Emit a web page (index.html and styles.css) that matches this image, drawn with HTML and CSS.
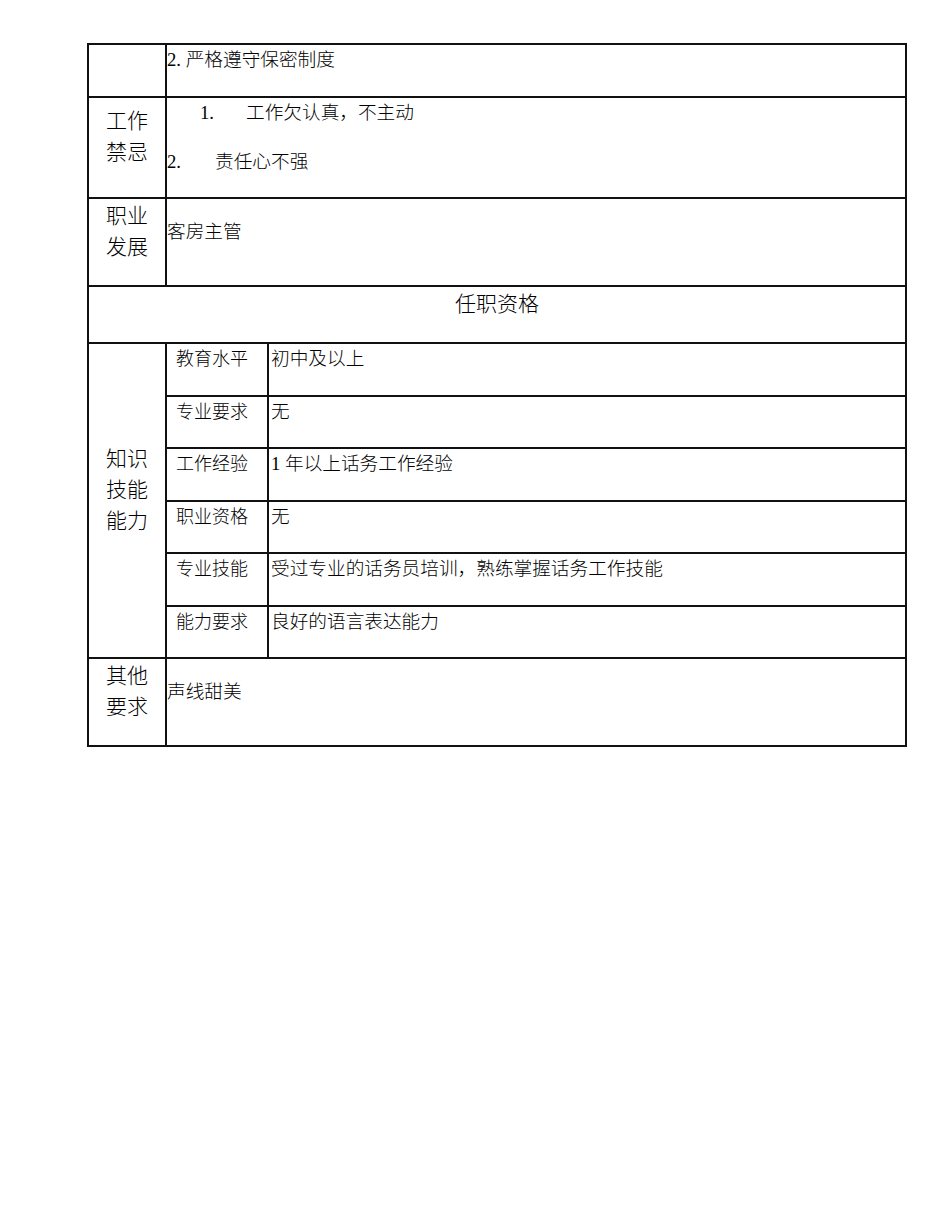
FILE: index.html
```html
<!DOCTYPE html>
<html lang="zh-CN">
<head>
<meta charset="utf-8">
<title>岗位说明书</title>
<link rel="stylesheet" href="styles.css">
</head>
<body>
<table class="sheet">
  <colgroup>
    <col class="c-label">
    <col class="c-sub">
    <col class="c-main">
  </colgroup>
  <tbody>
    <tr class="h53">
      <td class="label"></td>
      <td class="content" colspan="2">2. 严格遵守保密制度</td>
    </tr>
    <tr class="h101">
      <td class="label">工作<br>禁忌</td>
      <td class="content" colspan="2">
        <div class="item item-1"><span class="num num-1">1.</span>工作欠认真，不主动</div>
        <div class="item item-2"><span class="num num-2">2.</span>责任心不强</div>
      </td>
    </tr>
    <tr class="h88">
      <td class="label">职业<br>发展</td>
      <td class="content" colspan="2">客房主管</td>
    </tr>
    <tr class="h57">
      <td class="section" colspan="3">任职资格</td>
    </tr>
    <tr class="h53">
      <td class="label" rowspan="6">知识<br>技能<br>能力</td>
      <td class="sub">教育水平</td>
      <td class="content main">初中及以上</td>
    </tr>
    <tr class="h52">
      <td class="sub">专业要求</td>
      <td class="content main">无</td>
    </tr>
    <tr class="h53">
      <td class="sub">工作经验</td>
      <td class="content main">1 年以上话务工作经验</td>
    </tr>
    <tr class="h52">
      <td class="sub">职业资格</td>
      <td class="content main">无</td>
    </tr>
    <tr class="h53">
      <td class="sub">专业技能</td>
      <td class="content main">受过专业的话务员培训，熟练掌握话务工作技能</td>
    </tr>
    <tr class="h52">
      <td class="sub">能力要求</td>
      <td class="content main">良好的语言表达能力</td>
    </tr>
    <tr class="h88">
      <td class="label">其他<br>要求</td>
      <td class="content" colspan="2">声线甜美</td>
    </tr>
  </tbody>
</table>
</body>
</html>
```
FILE: styles.css
```css
html, body {
  margin: 0;
  padding: 0;
  background: #ffffff;
}

body {
  font-family: "Liberation Serif", "Noto Sans CJK SC", serif;
  font-weight: 300;
  color: #000000;
}

.sheet {
  margin: 43px 0 0 87px;
  width: 820px;
  border-collapse: collapse;
  table-layout: fixed;
}

.c-label { width: 78px; }
.c-sub { width: 102px; }
.c-main { width: auto; }

.sheet td {
  border: 2px solid #111111;
  vertical-align: middle;
  padding: 0 0 21px 0;
}

.h53 { height: 53px; }
.h52 { height: 52px; }
.h57 { height: 57px; }
.h88 { height: 88px; }
.h101 { height: 101px; }

.label {
  text-align: center;
  font-size: 21px;
  line-height: 31px;
}

.section {
  text-align: center;
  font-size: 21px;
  line-height: 28px;
}

.content {
  font-size: 18.67px;
  line-height: 24px;
  padding-left: 0;
}

.content.main {
  padding-left: 2px;
}

.sub {
  font-size: 18px;
  line-height: 24px;
  padding-left: 9px !important;
  white-space: nowrap;
}

.item-1 {
  padding-left: 33px;
  margin-bottom: 25px;
}

.num {
  display: inline-block;
}

.num-1 { width: 46px; }
.num-2 { width: 48px; }
```
